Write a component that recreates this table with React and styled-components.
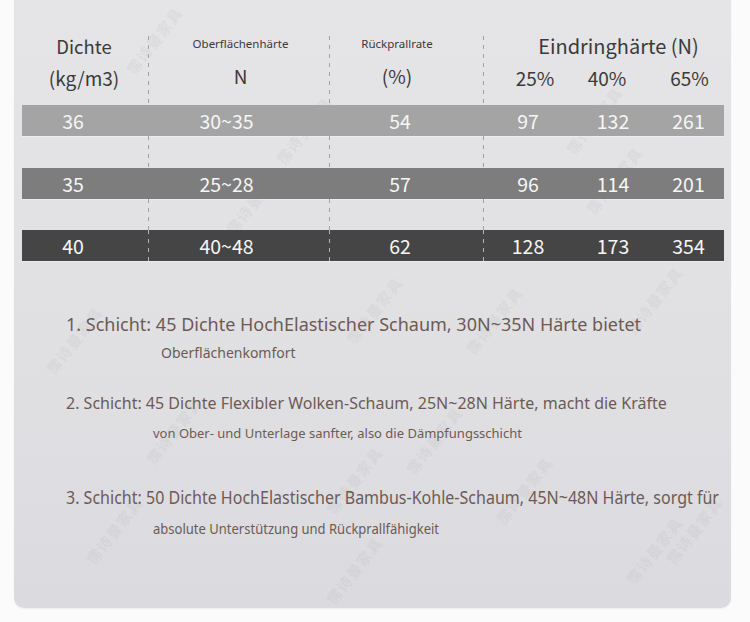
import React from 'react';
import styled, { createGlobalStyle } from 'styled-components';

const GlobalStyle = createGlobalStyle`
  html, body {
    margin: 0;
    padding: 0;
    background: #fbfbfb;
  }
  body {
    font-family: 'Noto Sans', 'Open Sans', sans-serif;
    overflow: hidden;
  }
`;

const dash = color =>
  `repeating-linear-gradient(to bottom, ${color} 0 4px, transparent 4px 9px) left top / 1px 100% no-repeat`;

// moves centred text sideways by `lean` px (padding on one side shifts the centre by half)
const lean = value => `
  padding-left: ${Math.max(0, (value || 0) * 2)}px;
  padding-right: ${Math.max(0, -(value || 0) * 2)}px;
`;

const Page = styled.div`
  width: 750px;
  height: 622px;
  position: relative;
  overflow: hidden;
`;

const Card = styled.div`
  position: relative;
  box-sizing: border-box;
  margin-left: 14px;
  width: 717px;
  height: 608px;
  padding: 36px 7px 0 8px;
  border-radius: 0 0 10px 10px;
  background: linear-gradient(180deg, #e5e5e7 0%, #e0e0e3 60%, #dbdbdf 100%);
  box-shadow: 0 1px 2px rgba(0, 0, 0, 0.06);
  overflow: hidden;
`;

const Table = styled.div`
  position: relative;
  width: 702px;
  display: flex;
  flex-direction: column;
  font-family: 'Noto Sans CJK SC', 'Noto Sans', sans-serif;
`;

const HeaderRow = styled.div`
  display: grid;
  grid-template-columns: 126px 181px 154px 241px;
  height: 69px;
`;

const HeaderCell = styled.div`
  display: flex;
  flex-direction: column;
  align-items: center;
  box-sizing: border-box;
  background: ${props => (props.divided ? dash('#a2a2a2') : 'none')};
  ${props => lean(props.lean)}
`;

const Title = styled.div`
  height: 20px;
  line-height: 20px;
  white-space: nowrap;
  color: #3a3a3a;
  font-family: ${props => (props.small ? "'Noto Sans', sans-serif" : "'Noto Sans CJK SC', sans-serif")};
  font-size: ${props => props.size}px;
  margin-top: ${props => (props.small ? '-2px' : '0')};
`;

const Unit = styled.div`
  margin-top: 12px;
  height: 20px;
  line-height: 20px;
  font-size: 19px;
  color: #3a3a3a;
  white-space: nowrap;
`;

const SubGrid = styled.div`
  align-self: stretch;
  display: grid;
  grid-template-columns: 96px 74px 71px;
  margin-top: 12px;
  margin-left: -${props => props.offset || 0}px;
`;

const SubUnit = styled.div`
  text-align: center;
  height: 20px;
  line-height: 20px;
  font-size: 19px;
  color: #3a3a3a;
  ${props => lean(props.lean)}
`;

const tones = {
  light: '#a4a4a4',
  mid: '#7d7d7d',
  dark: '#454545',
};

const DataRow = styled.div`
  display: grid;
  grid-template-columns: 126px 181px 154px 96px 74px 71px;
  height: 31px;
  background: ${props => tones[props.tone]};
  color: #f6f6f6;
  font-size: 19.5px;
  line-height: 31px;
  box-shadow: 0 1px 0 rgba(255, 255, 255, 0.35);
`;

const Value = styled.div`
  text-align: center;
  box-sizing: border-box;
  ${props => lean(props.lean)}
  background: ${props => (props.divided ? dash('#b4b4b4') : 'none')};
`;

const Spacer = styled.div`
  display: grid;
  grid-template-columns: 126px 181px 154px 241px;
  height: ${props => props.h}px;

  & > div + div {
    background: ${dash('#a2a2a2')};
  }
`;

const Notes = styled.div`
  display: flex;
  flex-direction: column;
  padding-left: 44px;
  color: #6d5a55;
`;

const Note = styled.div`
  display: flex;
  flex-direction: column;
  margin-top: ${props => props.top}px;
`;

const MainLine = styled.div`
  height: 24px;
  line-height: 24px;
  font-size: ${props => props.size}px;
  white-space: nowrap;
`;

const SubLine = styled.div`
  margin-top: ${props => props.gap}px;
  padding-left: ${props => props.indent}px;
  height: 18px;
  line-height: 18px;
  font-size: ${props => props.size || 13}px;
  white-space: nowrap;
`;

const Squeeze = styled.span`
  display: inline-block;
  transform-origin: left center;
  transform: scaleX(${props => props.k});
`;

const Mark = styled.div`
  position: absolute;
  font-family: 'Noto Sans CJK SC', sans-serif;
  font-size: 15px;
  font-weight: 700;
  letter-spacing: 1px;
  color: rgba(140, 140, 145, 0.11);
  white-space: nowrap;
  transform: rotate(-52deg);
  pointer-events: none;
`;

const marks = [
  [100, 30], [250, 120], [540, 110], [200, 190], [560, 170],
  [20, 330], [320, 300], [600, 290], [440, 310], [120, 420],
  [380, 430], [60, 520], [300, 470], [470, 480], [600, 540],
  [300, 560], [640, 520],
];

const leans = [-12, -12, -6, -3, -3, 0];

const rows = [
  { tone: 'light', v: ['36', '30~35', '54', '97', '132', '261'] },
  { tone: 'mid', v: ['35', '25~28', '57', '96', '114', '201'] },
  { tone: 'dark', v: ['40', '40~48', '62', '128', '173', '354'], divided: true },
];

const App = () => (
  <Page>
    <GlobalStyle />
    <Card>
      {marks.map(([x, y]) => (
        <Mark key={`${x}-${y}`} style={{ left: x, top: y }}>
          霈诗曼家具
        </Mark>
      ))}
      <Table>
        <HeaderRow>
          <HeaderCell lean={-1}>
            <Title size={18.5}>Dichte</Title>
            <Unit>(kg/m3)</Unit>
          </HeaderCell>
          <HeaderCell divided lean={2}>
            <Title small size={11.5}>Oberflächenhärte</Title>
            <Unit>N</Unit>
          </HeaderCell>
          <HeaderCell divided lean={-9}>
            <Title small size={11.5}>Rückprallrate</Title>
            <Unit>(%)</Unit>
          </HeaderCell>
          <HeaderCell divided lean={15}>
            <Title size={20}>Eindringhärte (N)</Title>
            <SubGrid offset={30}>
              <SubUnit lean={4}>25%</SubUnit>
              <SubUnit lean={-9}>40%</SubUnit>
              <SubUnit lean={1}>65%</SubUnit>
            </SubGrid>
          </HeaderCell>
        </HeaderRow>
        {rows.map((row, i) => (
          <React.Fragment key={row.tone}>
            {i > 0 && (
              <Spacer h={i === 1 ? 32 : 31}>
                <div />
                <div />
                <div />
                <div />
              </Spacer>
            )}
            <DataRow tone={row.tone}>
              {row.v.map((val, j) => (
                <Value
                  key={j}
                  lean={leans[j]}
                  divided={row.divided && j > 0 && j < 4}
                >
                  {val}
                </Value>
              ))}
            </DataRow>
          </React.Fragment>
        ))}
      </Table>
      <Notes>
        <Note top={51}>
          <MainLine size={18}>1. Schicht: 45 Dichte HochElastischer Schaum, 30N~35N Härte bietet</MainLine>
          <SubLine gap={8} indent={95} size={14}>Oberflächenkomfort</SubLine>
        </Note>
        <Note top={29}>
          <MainLine size={16}>2. Schicht: 45 Dichte Flexibler Wolken-Schaum, 25N~28N Härte, macht die Kräfte</MainLine>
          <SubLine gap={9} indent={87}>von Ober- und Unterlage sanfter, also die Dämpfungsschicht</SubLine>
        </Note>
        <Note top={43}>
          <MainLine size={18}>
            <Squeeze k={0.89}>
              3. Schicht: 50 Dichte HochElastischer Bambus-Kohle-Schaum, 45N~48N Härte, sorgt für
            </Squeeze>
          </MainLine>
          <SubLine gap={11} indent={87} size={14}>
            <Squeeze k={0.93}>absolute Unterstützung und Rückprallfähigkeit</Squeeze>
          </SubLine>
        </Note>
      </Notes>
    </Card>
  </Page>
);

export default App;
